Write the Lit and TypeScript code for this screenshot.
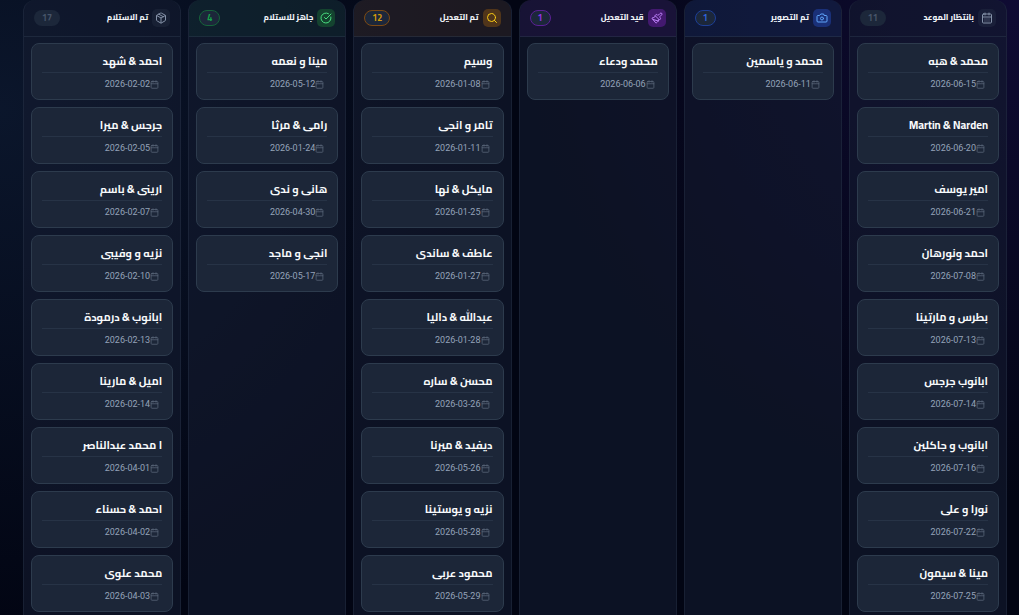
import { LitElement, html, css, svg } from "lit";
import { customElement, property } from "lit/decorators.js";

type Job = [name: string, date: string];
type Tone = "slate" | "blue" | "purple" | "amber" | "green" | "muted";
interface Stage {
  title: string;
  count: number;
  tone: Tone;
  icon: string;
  jobs: Job[];
}

const ICONS: Record<string, unknown> = {
  calendar: svg`<path d="M8 2v4M16 2v4M3 10h18"/><rect x="3" y="4" width="18" height="18" rx="2"/>`,
  calendarDays: svg`<path d="M8 2v4M16 2v4M3 10h18"/><rect x="3" y="4" width="18" height="18" rx="2"/><path d="M8 14h.01M12 14h.01M16 14h.01M8 18h.01M12 18h.01M16 18h.01"/>`,
  camera: svg`<path d="M14.5 4h-5L7 7H4a2 2 0 0 0-2 2v9a2 2 0 0 0 2 2h16a2 2 0 0 0 2-2V9a2 2 0 0 0-2-2h-3z"/><circle cx="12" cy="13" r="3"/>`,
  brush: svg`<path d="m14.622 17.897-10.68-2.913"/><path d="M18.376 2.622a1 1 0 1 1 3.002 3.002L17.36 9.643a.5.5 0 0 0 0 .707l.944.944a2.41 2.41 0 0 1 0 3.408l-.944.944a.5.5 0 0 1-.707 0L8.354 7.348a.5.5 0 0 1 0-.707l.944-.944a2.41 2.41 0 0 1 3.408 0l.944.944a.5.5 0 0 0 .707 0z"/><path d="M9 8c-1.804 2.71-3.97 3.46-6.583 3.948a.507.507 0 0 0-.302.819l7.32 8.883a1 1 0 0 0 1.185.204C12.735 20.405 16 16.792 16 15"/>`,
  search: svg`<circle cx="11" cy="11" r="8"/><path d="m21 21-4.3-4.3"/>`,
  check: svg`<path d="M21.801 10A10 10 0 1 1 17 3.335"/><path d="m9 11 3 3L22 4"/>`,
  box: svg`<path d="M11 21.73a2 2 0 0 0 2 0l7-4A2 2 0 0 0 21 16V8a2 2 0 0 0-1-1.73l-7-4a2 2 0 0 0-2 0l-7 4A2 2 0 0 0 3 8v8a2 2 0 0 0 1 1.73z"/><path d="M12 22V12M3.3 7 12 12l8.7-5M7.5 4.27l9 5.15"/>`,
};

const icon = (name: string) =>
  html`<svg viewBox="0 0 24 24" aria-hidden="true">${ICONS[name]}</svg>`;

const STAGES: Stage[] = [
  {
    title: "بانتظار الموعد", count: 11, tone: "slate", icon: "calendarDays",
    jobs: [
      ["محمد & هبه", "2026-06-15"],
      ["Martin & Narden", "2026-06-20"],
      ["امير يوسف", "2026-06-21"],
      ["احمد ونورهان", "2026-07-08"],
      ["بطرس و مارتينا", "2026-07-13"],
      ["ابانوب جرجس", "2026-07-14"],
      ["ابانوب و جاكلين", "2026-07-16"],
      ["نورا و على", "2026-07-22"],
      ["مينا & سيمون", "2026-07-25"],
    ],
  },
  {
    title: "تم التصوير", count: 1, tone: "blue", icon: "camera",
    jobs: [["محمد و ياسمين", "2026-06-11"]],
  },
  {
    title: "قيد التعديل", count: 1, tone: "purple", icon: "brush",
    jobs: [["محمد ودعاء", "2026-06-06"]],
  },
  {
    title: "تم التعديل", count: 12, tone: "amber", icon: "search",
    jobs: [
      ["وسيم", "2026-01-08"],
      ["تامر و انجى", "2026-01-11"],
      ["مايكل & نها", "2026-01-25"],
      ["عاطف & ساندى", "2026-01-27"],
      ["عبدالله & داليا", "2026-01-28"],
      ["محسن & ساره", "2026-03-26"],
      ["ديفيد & ميرنا", "2026-05-26"],
      ["نزيه و يوستينا", "2026-05-28"],
      ["محمود عربى", "2026-05-29"],
    ],
  },
  {
    title: "جاهز للاستلام", count: 4, tone: "green", icon: "check",
    jobs: [
      ["مينا و نعمه", "2026-05-12"],
      ["رامى & مرثا", "2026-01-24"],
      ["هانى و ندى", "2026-04-30"],
      ["انجى و ماجد", "2026-05-17"],
    ],
  },
  {
    title: "تم الاستلام", count: 17, tone: "muted", icon: "box",
    jobs: [
      ["احمد & شهد", "2026-02-02"],
      ["جرجس & ميرا", "2026-02-05"],
      ["ارينى & باسم", "2026-02-07"],
      ["نزيه و وفيبى", "2026-02-10"],
      ["ابانوب & درمودة", "2026-02-13"],
      ["اميل & مارينا", "2026-02-14"],
      ["ا محمد عبدالناصر", "2026-04-01"],
      ["احمد & حسناء", "2026-04-02"],
      ["محمد علوى", "2026-04-03"],
    ],
  },
];

@customElement("job-card")
export class JobCard extends LitElement {
  @property() name = "";
  @property() date = "";

  static styles = css`
    :host {
      display: block;
      flex: none;
    }
    .card {
      box-sizing: border-box;
      height: 57px;
      padding: 7px 10px 0;
      border: 1px solid #2d3b4d;
      border-radius: 8px;
      background: #1c2638;
    }
    .name {
      margin: 0;
      height: 21px;
      border-bottom: 1px solid #273346;
      color: #f8fafc;
      font-size: 11px;
      font-weight: 700;
      line-height: 20px;
      white-space: nowrap;
    }
    .date {
      display: flex;
      align-items: center;
      padding: 5px 3px 0;
      color: #94a3b8;
      font-family: Roboto, sans-serif;
      font-size: 9px;
      line-height: 12px;
    }
    svg {
      width: 9px;
      height: 9px;
      fill: none;
      stroke: #5b687b;
      stroke-width: 2;
      stroke-linecap: round;
      stroke-linejoin: round;
    }
  `;

  render() {
    return html`
      <article class="card">
        <h3 class="name">${this.name}</h3>
        <div class="date">${icon("calendar")}<time datetime=${this.date}>${this.date}</time></div>
      </article>
    `;
  }
}

@customElement("app-root")
export class AppRoot extends LitElement {
  static styles = css`
    :host {
      display: block;
      height: 100vh;
      overflow: hidden;
      direction: rtl;
      font-family: Cairo, Roboto, "DejaVu Sans", sans-serif;
      background:
        radial-gradient(circle at 100% 0, rgba(44, 24, 120, 0.32), transparent 42%),
        radial-gradient(circle at 0 18%, rgba(30, 58, 95, 0.32), transparent 45%),
        #020513;
    }
    .board {
      box-sizing: border-box;
      display: grid;
      grid-template-columns: repeat(6, minmax(0, 1fr));
      gap: 7px;
      height: 100%;
      padding: 0 12px 0 23px;
    }
    .column {
      display: flex;
      flex-direction: column;
      min-height: 0;
      border: solid rgba(51, 65, 85, 0.32);
      border-width: 0 1px;
      border-radius: 12px 12px 0 0;
      background: rgba(20, 27, 48, 0.58);
      overflow: hidden;
    }
    .head {
      --ink: #8592a8;
      --chip: rgba(51, 65, 85, 0.25);
      --tint: transparent;
      --edge: transparent;
      --num: #475569;
      display: flex;
      align-items: center;
      gap: 4px;
      box-sizing: border-box;
      height: 37px;
      padding: 0 10px;
      border-bottom: 1px solid rgba(51, 65, 85, 0.4);
      background: var(--tint);
    }
    .blue {
      --ink: #60a5fa;
      --chip: #1a3078;
      --tint: rgba(29, 78, 216, 0.1);
      --edge: #1e3f96;
      --num: #2f62d8;
    }
    .purple {
      --ink: #c084fc;
      --chip: #43196f;
      --tint: rgba(126, 34, 206, 0.1);
      --edge: #5b2195;
      --num: #9333ea;
    }
    .amber {
      --ink: #facc15;
      --chip: #50351a;
      --tint: rgba(146, 84, 14, 0.12);
      --edge: #7c4a14;
      --num: #d19a0a;
    }
    .green {
      --ink: #4ade80;
      --chip: #14432f;
      --tint: rgba(22, 120, 70, 0.11);
      --edge: #17633b;
      --num: #16a34a;
    }
    .chip {
      display: grid;
      place-items: center;
      width: 18px;
      height: 18px;
      border-radius: 5px;
      background: var(--chip);
    }
    .chip svg {
      width: 12px;
      height: 12px;
      fill: none;
      stroke: var(--ink);
      stroke-width: 2;
      stroke-linecap: round;
      stroke-linejoin: round;
    }
    .title {
      flex: 1;
      margin: 0;
      color: #f1f5f9;
      font-size: 8px;
      font-weight: 800;
      line-height: 16px;
      white-space: nowrap;
    }
    .count {
      padding: 0 7px;
      border: 1px solid var(--edge);
      border-radius: 8px;
      background: #1c273a;
      color: var(--num);
      font-size: 9px;
      font-weight: 700;
      line-height: 14px;
    }
    .list {
      display: flex;
      flex: 1;
      flex-direction: column;
      gap: 7px;
      min-height: 0;
      padding: 6px 7px 0;
      overflow-y: auto;
      scrollbar-width: none;
    }
  `;

  render() {
    return html`
      <main class="board">
        ${STAGES.map(
          (s) => html`
            <section class="column" aria-label=${s.title}>
              <header class="head ${s.tone}">
                <span class="chip">${icon(s.icon)}</span>
                <h2 class="title">${s.title}</h2>
                <span class="count">${s.count}</span>
              </header>
              <div class="list">
                ${s.jobs.map(([name, date]) => html`<job-card .name=${name} .date=${date}></job-card>`)}
              </div>
            </section>
          `
        )}
      </main>
    `;
  }
}
